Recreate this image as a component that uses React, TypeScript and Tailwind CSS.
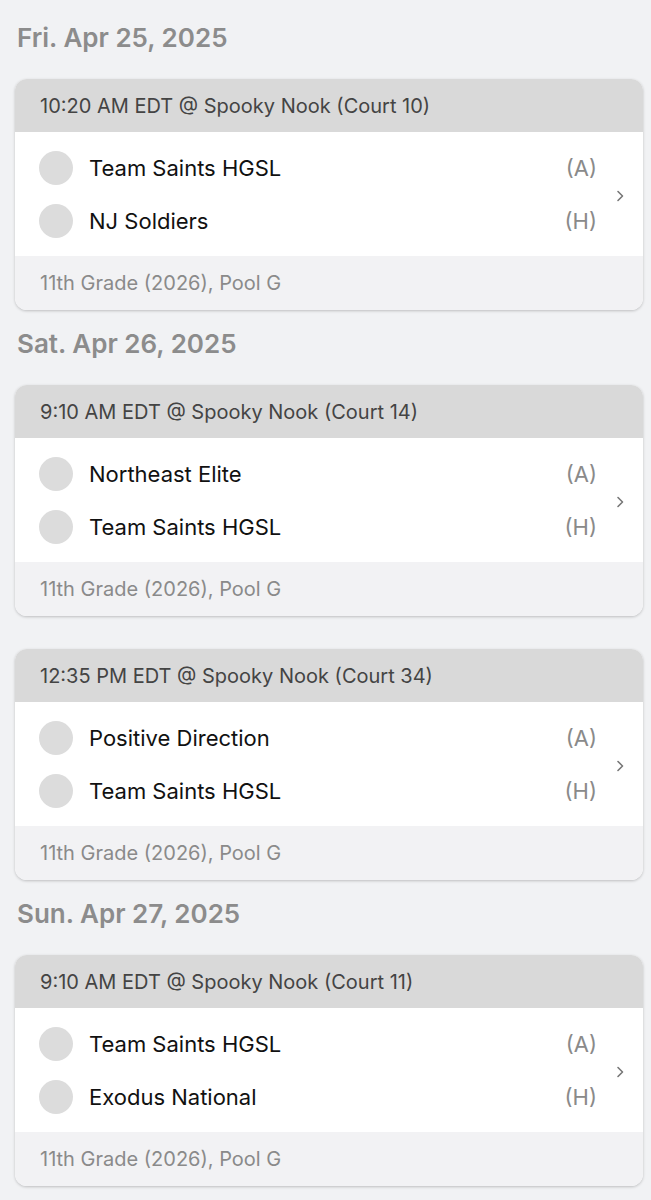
import React from "react";

type Game = {
  time: string;
  away: string;
  home: string;
  division: string;
};

type Day = {
  label: string;
  games: Game[];
};

const days: Day[] = [
  {
    label: "Fri. Apr 25, 2025",
    games: [
      {
        time: "10:20 AM EDT @ Spooky Nook (Court 10)",
        away: "Team Saints HGSL",
        home: "NJ Soldiers",
        division: "11th Grade (2026), Pool G",
      },
    ],
  },
  {
    label: "Sat. Apr 26, 2025",
    games: [
      {
        time: "9:10 AM EDT @ Spooky Nook (Court 14)",
        away: "Northeast Elite",
        home: "Team Saints HGSL",
        division: "11th Grade (2026), Pool G",
      },
      {
        time: "12:35 PM EDT @ Spooky Nook (Court 34)",
        away: "Positive Direction",
        home: "Team Saints HGSL",
        division: "11th Grade (2026), Pool G",
      },
    ],
  },
  {
    label: "Sun. Apr 27, 2025",
    games: [
      {
        time: "9:10 AM EDT @ Spooky Nook (Court 11)",
        away: "Team Saints HGSL",
        home: "Exodus National",
        division: "11th Grade (2026), Pool G",
      },
    ],
  },
];

function TeamRow({ name, side }: { name: string; side: string }) {
  return (
    <div className="flex h-[34px] items-center">
      <div className="h-[34px] w-[34px] shrink-0 rounded-full bg-[#dcdcdc]" />
      <span className="ml-[16px] flex-1 text-[22px] leading-none text-[#111]">{name}</span>
      <span className="text-[22px] leading-none text-[#8a8a8a]">{side}</span>
    </div>
  );
}

function GameCard({ game }: { game: Game }) {
  return (
    <div className="overflow-hidden rounded-[12px] bg-white shadow-[0_1px_3px_rgba(0,0,0,0.22)]">
      <div className="flex h-[53px] items-center bg-[#d9d9d9] px-[25px] text-[20px] text-[#444]">
        {game.time}
      </div>
      <div className="flex items-center bg-white pt-[19px] pb-[18px] pl-[24px] pr-[18px]">
        <div className="flex flex-1 flex-col gap-[19px]">
          <TeamRow name={game.away} side="(A)" />
          <TeamRow name={game.home} side="(H)" />
        </div>
        <svg width="10" height="14" viewBox="0 0 10 14" className="ml-[18px] mt-[2px]">
          <path d="M3 2.5 L7.5 7 L3 11.5" fill="none" stroke="#777" strokeWidth="1.6" strokeLinecap="round" strokeLinejoin="round" />
        </svg>
      </div>
      <div className="flex h-[54px] items-center bg-[#f2f2f4] px-[25px] text-[20px] text-[#8a8a8a]">
        {game.division}
      </div>
    </div>
  );
}

export default function App() {
  return (
    <div
      className="min-h-[1200px] bg-[#f1f2f4] pl-[15px] pr-[8px] pt-[22px] pb-[20px]"
      style={{ fontFamily: "Inter, 'Noto Sans', sans-serif" }}
    >
      {days.map((day, i) => (
        <div key={day.label} className={i === 0 ? "" : "mt-[18px]"}>
          <h2 className="mb-[25px] ml-[2px] h-8 text-[26px] leading-8 font-semibold text-[#8c8c8c]">
            {day.label}
          </h2>
          <div className="flex flex-col gap-[33px]">
            {day.games.map((g) => (
              <GameCard key={g.time} game={g} />
            ))}
          </div>
        </div>
      ))}
    </div>
  );
}
